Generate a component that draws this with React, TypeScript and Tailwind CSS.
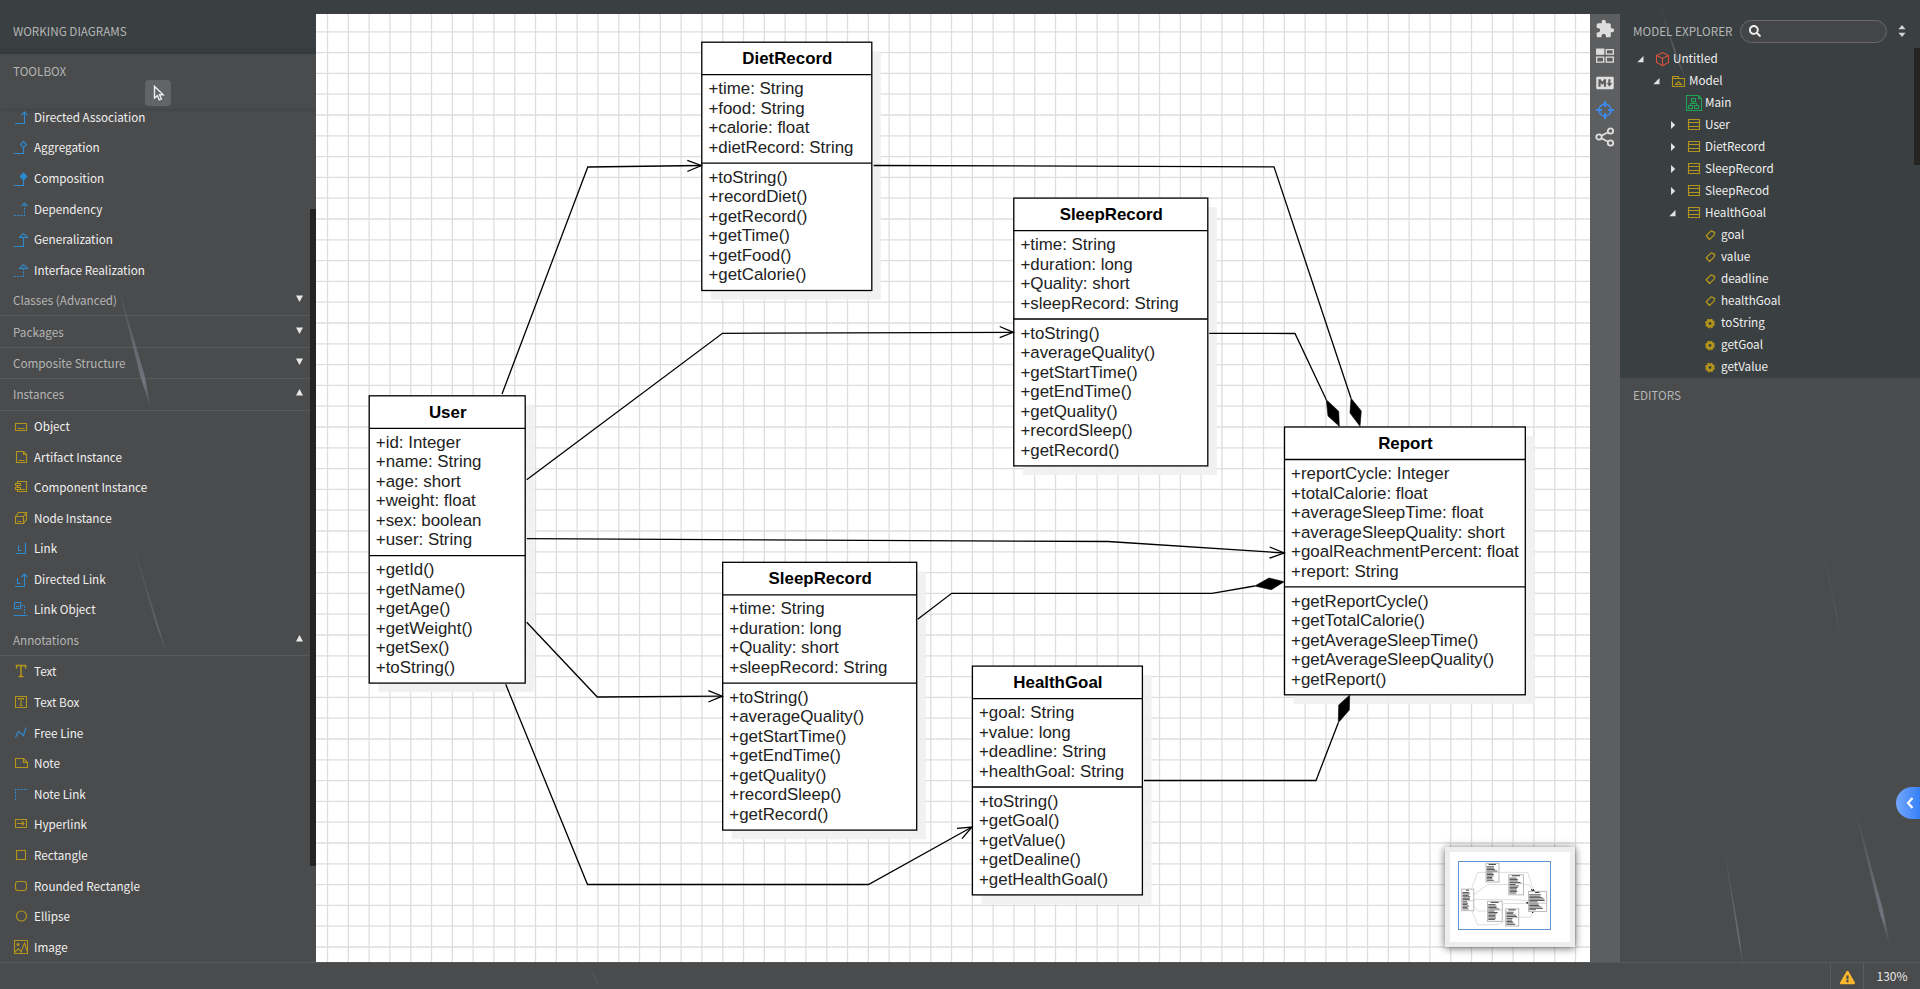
import type { ReactNode } from 'react';
import { FaExclamationTriangle, FaSearch } from 'react-icons/fa';
import { IoLogoMarkdown } from 'react-icons/io';
import { MdExtension } from 'react-icons/md';

const UNIT = 1.3;
const GRID = 16 * UNIT;
const LINE = 15 * UNIT;
const TITLE_H = 25 * UNIT;

interface ClassNode {
  name: string;
  x: number;
  y: number;
  width: number;
  attributes: string[];
  operations: string[];
}

interface Connector {
  points: string;
  arrow?: string;
  diamond?: string;
}

const SLEEP_ATTRIBUTES = ['+time: String', '+duration: long', '+Quality: short', '+sleepRecord: String'];
const SLEEP_OPERATIONS = [
  '+toString()',
  '+averageQuality()',
  '+getStartTime()',
  '+getEndTime()',
  '+getQuality()',
  '+recordSleep()',
  '+getRecord()',
];

const CLASSES: ClassNode[] = [
  {
    name: 'DietRecord',
    x: 385.8,
    y: 28.2,
    width: 170,
    attributes: ['+time: String', '+food: String', '+calorie: float', '+dietRecord: String'],
    operations: ['+toString()', '+recordDiet()', '+getRecord()', '+getTime()', '+getFood()', '+getCalorie()'],
  },
  {
    name: 'SleepRecord',
    x: 697.8,
    y: 184.1,
    width: 194,
    attributes: SLEEP_ATTRIBUTES,
    operations: SLEEP_OPERATIONS,
  },
  {
    name: 'User',
    x: 53.2,
    y: 381.8,
    width: 156,
    attributes: ['+id: Integer', '+name: String', '+age: short', '+weight: float', '+sex: boolean', '+user: String'],
    operations: ['+getId()', '+getName()', '+getAge()', '+getWeight()', '+getSex()', '+toString()'],
  },
  {
    name: 'SleepRecord',
    x: 406.7,
    y: 548.3,
    width: 194,
    attributes: SLEEP_ATTRIBUTES,
    operations: SLEEP_OPERATIONS,
  },
  {
    name: 'HealthGoal',
    x: 656.4,
    y: 652.1,
    width: 170,
    attributes: ['+goal: String', '+value: long', '+deadline: String', '+healthGoal: String'],
    operations: ['+toString()', '+getGoal()', '+getValue()', '+getDealine()', '+getHealthGoal()'],
  },
  {
    name: 'Report',
    x: 968.5,
    y: 413,
    width: 240.8,
    attributes: [
      '+reportCycle: Integer',
      '+totalCalorie: float',
      '+averageSleepTime: float',
      '+averageSleepQuality: short',
      '+goalReachmentPercent: float',
      '+report: String',
    ],
    operations: [
      '+getReportCycle()',
      '+getTotalCalorie()',
      '+getAverageSleepTime()',
      '+getAverageSleepQuality()',
      '+getReport()',
    ],
  },
];

const CONNECTORS: Connector[] = [
  { points: '186,380 271.8,153 385,151.5', arrow: '371.3,146.3 385.3,151.5 371.3,157.5' },
  { points: '210.7,465.7 406.5,319.3 697,318.3', arrow: '683.7,312.5 697.3,318.3 683.7,323.7' },
  { points: '210.7,524.7 792,527.5 968,539', arrow: '953.7,533 968.2,539 953.4,544.2' },
  { points: '210.7,608.3 281.3,683 406,682.2', arrow: '392.3,676.7 406.3,682.2 392.3,688' },
  { points: '189.7,670.3 271.5,870.5 552.5,870.5 656,813', arrow: '641,814.3 656,813 646,824.7' },
  { points: '557.7,151.5 958,152.8 1035,384.3', diamond: '1035,384.3 1034,399 1044,412.3 1045.3,397' },
  { points: '893.3,319.3 979,319.5 1010.3,385.7', diamond: '1010.3,385.7 1012,402 1023.3,412.3 1022.7,397.3' },
  { points: '601.7,605.3 635.7,579.3 896,579.3 938.7,572', diamond: '938.7,572 953,564 968.2,567.7 955.3,575.7' },
  { points: '828,766.5 1000,766.5 1022.3,708.7', diamond: '1022.3,708.7 1022.7,691 1033.7,681 1033.3,696' },
];

const VERTICALS = Array.from({ length: 61 }, (_, i) => 11.5 + i * GRID);
const HORIZONTALS = Array.from({ length: 45 }, (_, i) => 17.8 + i * GRID);

const attributesHeight = (node: ClassNode) => node.attributes.length * LINE + 8 * UNIT;
const nodeHeight = (node: ClassNode) =>
  TITLE_H + attributesHeight(node) + node.operations.length * LINE + 8 * UNIT;

function ClassBox({ node }: { node: ClassNode }) {
  const { x, y, width } = node;
  const attrTop = y + TITLE_H;
  const opTop = attrTop + attributesHeight(node);

  return (
    <g>
      <rect x={x + 9.1} y={y + 9.1} width={width} height={nodeHeight(node)} fill="#f0f0f0" fillOpacity={0.92} />
      <rect x={x} y={y} width={width} height={nodeHeight(node)} fill="#fff" stroke="#000" strokeWidth={1.3} />
      <path d={`M${x} ${attrTop}h${width}M${x} ${opTop}h${width}`} stroke="#000" strokeWidth={1.3} />
      <text x={x + width / 2 + 0.5} y={Math.round(y + 21.8)} textAnchor="middle" fontWeight={700} fill="#000">
        {node.name}
      </text>
      {node.attributes.map((line, i) => (
        <text key={line} x={x + 6.6} y={Math.round(attrTop + 19.6 + i * LINE)}>
          {line}
        </text>
      ))}
      {node.operations.map((line, i) => (
        <text key={line} x={x + 6.6} y={Math.round(opTop + 19.6 + i * LINE)}>
          {line}
        </text>
      ))}
    </g>
  );
}

function Diagram() {
  return (
    <svg
      width={1274}
      height={948}
      className="block font-['Liberation_Sans',Arial,sans-serif] text-[16.9px]"
      fill="#222"
    >
      <g stroke="#dedede" strokeWidth={1.3}>
        {VERTICALS.map((x) => (
          <line key={x} x1={x} x2={x} y1={0} y2={948} />
        ))}
        {HORIZONTALS.map((y) => (
          <line key={y} x1={0} x2={1274} y1={y} y2={y} />
        ))}
      </g>
      {CLASSES.map((node) => (
        <ClassBox key={`${node.name}-${node.x}`} node={node} />
      ))}
      {CONNECTORS.map((c) => (
        <g key={c.points} stroke="#000" strokeWidth={1.3}>
          <polyline points={c.points} fill="none" />
          {c.arrow && <polyline points={c.arrow} fill="none" />}
          {c.diamond && <polygon points={c.diamond} strokeWidth={0.6} fill="#000" />}
        </g>
      ))}
    </svg>
  );
}

function Minimap() {
  return (
    <div className="absolute top-[833px] left-[1129px] h-[100px] w-[130px] border-5 border-[#ededed] bg-white shadow-[0_1px_8px_rgba(0,0,0,0.6)]">
      <svg width={120} height={90} className="block">
        <g transform="translate(7.9 9.3) scale(0.0729)">
          {CONNECTORS.map((c) => (
            <g key={c.points}>
              <polyline points={c.points} fill="none" stroke="#ccc" strokeWidth={9} />
              {c.diamond && <polygon points={c.diamond} stroke="#000" strokeWidth={10} />}
            </g>
          ))}
          {CLASSES.map((node) => {
            const opTop = node.y + TITLE_H + attributesHeight(node);
            return (
              <g key={`${node.name}-${node.x}`}>
                <rect
                  x={node.x}
                  y={node.y}
                  width={node.width + 8}
                  height={nodeHeight(node) + 8}
                  fill="#fff"
                  stroke="#bbb"
                  strokeWidth={14}
                />
                <rect
                  x={node.x + node.width / 2 - node.name.length * 5}
                  y={node.y + 8}
                  width={node.name.length * 10}
                  height={13}
                  fill="#333"
                />
                <path d={`M${node.x} ${opTop}h${node.width}`} stroke="#999" strokeWidth={8} />
                {[...node.attributes, ...node.operations].map((line, i) => (
                  <rect
                    key={line}
                    x={node.x + 10}
                    y={node.y + TITLE_H + 8 + i * LINE + (i < node.attributes.length ? 0 : 10)}
                    width={line.length * 7.6}
                    height={12}
                    fill="#444"
                  />
                ))}
              </g>
            );
          })}
        </g>
        <rect x={8.5} y={9.5} width={92} height={68} fill="none" stroke="#6096cf" />
      </svg>
    </div>
  );
}

function Glyph({ children, className }: { children: ReactNode; className: string }) {
  return (
    <svg
      width={16}
      height={16}
      viewBox="0 0 16 16"
      fill="none"
      stroke="currentColor"
      strokeWidth={1.1}
      className={`shrink-0 ${className}`}
    >
      {children}
    </svg>
  );
}

const BLUE = 'text-[#2d8bd0]';
const GOLD = 'text-[#b4951c]';

interface ToolItem {
  label: string;
  color: string;
  icon: ReactNode;
}

const RELATIONS: ToolItem[] = [
  { label: 'Directed Association', color: BLUE, icon: <path d="M2 14.5h9.5V3M8.5 6l3-3 3 3" /> },
  { label: 'Aggregation', color: BLUE, icon: <path d="M.7 14.5h9.8V8.5M10.5 2.5l3 3-3 3-3-3z" /> },
  {
    label: 'Composition',
    color: BLUE,
    icon: (
      <>
        <path d="M.7 15.5h9.8V9" />
        <path d="M10.5 3l3.3 3.5-3.3 3.5-3.3-3.5z" fill="currentColor" />
      </>
    ),
  },
  {
    label: 'Dependency',
    color: BLUE,
    icon: (
      <>
        <path d="M1 14.5h10.5V3" strokeDasharray="2 1.2" />
        <path d="M8.5 5l3-3 3 3" />
      </>
    ),
  },
  { label: 'Generalization', color: BLUE, icon: <path d="M.7 15.5h9.8V7M6.5 6.5l4-4 4 4z" /> },
  {
    label: 'Interface Realization',
    color: BLUE,
    icon: (
      <>
        <path d="M.7 14.5h9.8V6.5" strokeDasharray="2 1.2" />
        <path d="M6.5 6.5l4-4 4 4z" />
      </>
    ),
  },
];

const INSTANCES: ToolItem[] = [
  { label: 'Object', color: GOLD, icon: <path d="M2.5 5.5h11v7h-11zM4.5 10.5h7" /> },
  { label: 'Artifact Instance', color: GOLD, icon: <path d="M3.5 2.5h7l3 3v8h-10zM10.5 2.5v3h3M5.5 11.5h6" /> },
  {
    label: 'Component Instance',
    color: GOLD,
    icon: <path d="M4.5 4.5v-2h9v10h-9v-2M2.5 4.5h5v2h-5zM2.5 8.5h5v2h-5zM4.5 6.5v2M8 10.5h4" />,
  },
  {
    label: 'Node Instance',
    color: GOLD,
    icon: <path d="M2.5 6.5h8v7h-8zM2.5 6.5l3-4h8l-3 4M13.5 2.5v7l-3 4M4.5 11.5h4" />,
  },
  { label: 'Link', color: BLUE, icon: <path d="M3 13.5h9.5V2.5M5.5 5v5.5h3" /> },
  { label: 'Directed Link', color: BLUE, icon: <path d="M2 15.5h9.5V3.5M8.5 6l3-3 3 3M4.5 7v5.5h3" /> },
  {
    label: 'Link Object',
    color: BLUE,
    icon: (
      <>
        <path d="M1.5 1.5h6v6h-6zM3 5.5h3M.5 14.5h14" />
        <path d="M8.5 4.5h3V14" strokeDasharray="2 1.2" />
      </>
    ),
  },
];

const ANNOTATIONS: ToolItem[] = [
  { label: 'Text', color: GOLD, icon: <path d="M3.5 5.5v-3h9v3M8 2.5v11M5.5 13.5h5" strokeWidth={1.5} /> },
  {
    label: 'Text Box',
    color: GOLD,
    icon: <path d="M2.5 2.5h11v11h-11zM5.5 6V4.5h5V6M8 4.5v7M6.5 11.5h3" />,
  },
  { label: 'Free Line', color: BLUE, icon: <path d="M2.5 12.5l3-6 5 4 2.5-8" strokeWidth={1.2} /> },
  { label: 'Note', color: GOLD, icon: <path d="M2.5 3.5h8l4 4v5h-12zM10.5 3.5v4h4" /> },
  { label: 'Note Link', color: BLUE, icon: <path d="M2.5 14V3.5H15" strokeDasharray="2 1.2" /> },
  { label: 'Hyperlink', color: GOLD, icon: <path d="M2.5 3.5h11v8h-11zM4 7.5h7M9 5.5l2 2-2 2" /> },
  { label: 'Rectangle', color: GOLD, icon: <path d="M3.5 3.5h9v9h-9z" /> },
  { label: 'Rounded Rectangle', color: GOLD, icon: <rect x={2.5} y={3.5} width={11} height={9} rx={2.5} /> },
  { label: 'Ellipse', color: GOLD, icon: <circle cx={8.5} cy={8} r={5} /> },
  {
    label: 'Image',
    color: GOLD,
    icon: (
      <>
        <path d="M1.5 1.5h13v13h-13zM2 13l3.5-3.5L8 13l3.5-9 3 9" />
        <circle cx={5} cy={5.5} r={1} fill="currentColor" />
      </>
    ),
  },
];

function ToolRows({ items }: { items: ToolItem[] }) {
  return (
    <>
      {items.map((item) => (
        <div key={item.label} className="flex h-[30.6px] items-center gap-[5px] pl-[13px] leading-[14px] text-[#f0f0f0]">
          <Glyph className={item.color}>{item.icon}</Glyph>
          <span>{item.label}</span>
        </div>
      ))}
    </>
  );
}

function SectionHeader({ label, open }: { label: string; open?: boolean }) {
  return (
    <div className="mr-[6px] flex h-[31.4px] items-center justify-between border-b border-[#59595b] pr-[7px] pl-[13px] text-[#b4b6b6]">
      <span>{label}</span>
      <svg width={7} height={7} className="-mt-[3px] fill-[#e8e8e8]">
        <path d={open ? 'M3.5 0L7 6.5H0z' : 'M0 .5h7L3.5 7z'} />
      </svg>
    </div>
  );
}

function Toolbox() {
  return (
    <aside className="flex w-[316px] shrink-0 flex-col">
      <div className="flex h-[34px] items-center bg-[#3a3f41] pl-[13px] text-[#b4b6b6]">WORKING DIAGRAMS</div>
      <div className="h-[6px] bg-[#373c3e]" />
      <div className="h-[55px] shrink-0 border-b border-[#474849] px-[13px] text-[#b4b6b6] shadow-[0_1px_3px_rgba(0,0,0,0.12)]">
        <div className="h-[26px] pt-[7px] leading-[20px]">TOOLBOX</div>
        <div className="mx-auto flex h-[26px] w-[26px] items-center justify-center rounded-sm bg-[#626567]">
          <svg width={14} height={18} viewBox="0 0 14 18" fill="none" stroke="#eee" strokeWidth={1.4} className="ml-[2px]">
            <path d="M2.5 2.5v11.5l2.8-2.4 2 4.2 2.1-1-1.9-4h3.7z" />
          </svg>
        </div>
      </div>
      <div className="relative min-h-0 flex-1 overflow-hidden">
        <div className="-mt-[7.5px]">
          <ToolRows items={RELATIONS} />
          <SectionHeader label="Classes (Advanced)" />
          <SectionHeader label="Packages" />
          <SectionHeader label="Composite Structure" />
          <SectionHeader label="Instances" open />
          <ToolRows items={INSTANCES} />
          <SectionHeader label="Annotations" open />
          <ToolRows items={ANNOTATIONS} />
        </div>
        <div className="absolute top-[100px] right-0 h-[657px] w-[6px] bg-[#242424]" />
      </div>
    </aside>
  );
}

type NodeKind = 'project' | 'model' | 'diagram' | 'class' | 'attribute' | 'operation';

interface TreeNode {
  label: string;
  kind: NodeKind;
  indent: string;
  state?: 'open' | 'closed';
}

const TREE: TreeNode[] = [
  { label: 'Untitled', kind: 'project', indent: 'pl-[17px]', state: 'open' },
  { label: 'Model', kind: 'model', indent: 'pl-[33px]', state: 'open' },
  { label: 'Main', kind: 'diagram', indent: 'pl-[49px]' },
  { label: 'User', kind: 'class', indent: 'pl-[49px]', state: 'closed' },
  { label: 'DietRecord', kind: 'class', indent: 'pl-[49px]', state: 'closed' },
  { label: 'SleepRecord', kind: 'class', indent: 'pl-[49px]', state: 'closed' },
  { label: 'SleepRecod', kind: 'class', indent: 'pl-[49px]', state: 'closed' },
  { label: 'HealthGoal', kind: 'class', indent: 'pl-[49px]', state: 'open' },
  { label: 'goal', kind: 'attribute', indent: 'pl-[65px]' },
  { label: 'value', kind: 'attribute', indent: 'pl-[65px]' },
  { label: 'deadline', kind: 'attribute', indent: 'pl-[65px]' },
  { label: 'healthGoal', kind: 'attribute', indent: 'pl-[65px]' },
  { label: 'toString', kind: 'operation', indent: 'pl-[65px]' },
  { label: 'getGoal', kind: 'operation', indent: 'pl-[65px]' },
  { label: 'getValue', kind: 'operation', indent: 'pl-[65px]' },
];

const KIND_COLORS: Record<NodeKind, string> = {
  project: 'text-[#d9513d]',
  model: GOLD,
  diagram: 'text-[#1fa354]',
  class: GOLD,
  attribute: GOLD,
  operation: GOLD,
};

const KIND_ICONS: Record<NodeKind, ReactNode> = {
  project: <path d="M8.5 1.5l6 3v7l-6 3.2-6-3.2v-7zM2.5 4.5l6 3 6-3M8.5 7.5v7" />,
  model: <path d="M2.5 13.5v-10h6v2h6v8h-12zM2.5 5.5h6M5.5 11.5l3-3 3 3z" />,
  diagram: (
    <path d="M.5 .5h12l3 3v12h-15zM12.5 .5v3h3M5.5 3.5h4v3h-4zM7.5 6.5v2M4.5 10.5v-2h6v2M2.5 10.5h4v3h-4zM8.5 10.5h4v3h-4z" />
  ),
  class: <path d="M2.5 2.5h11v10h-11zM2.5 5.5h11M2.5 9.5h11" />,
  attribute: <path d="M4.2 8.8l4.9-4.9 3.6 1.4-.6 2.8-4.6 4.4z" strokeLinejoin="round" strokeWidth={1.3} />,
  operation: (
    <>
      <circle cx={8} cy={8.5} r={2.7} strokeWidth={2.6} />
      <circle cx={8} cy={8.5} r={4.2} strokeWidth={1.4} strokeDasharray="2 1.3" />
    </>
  ),
};

function ModelExplorer() {
  return (
    <section className="relative h-[364px] bg-[#3a3f41]">
      <div className="flex h-[34px] items-center pl-[13px] text-[#b4b6b6]">
        <span className="w-[107px] whitespace-nowrap">MODEL EXPLORER</span>
        <div className="flex h-[23px] w-[147px] items-center rounded-full border border-[#67696b] bg-[#434547] pl-[8px]">
          <FaSearch size={12} className="text-[#eeeeee]" />
        </div>
        <svg width={8} height={12} className="ml-[11px] fill-[#d5d5d5]">
          <path d="M4 0l3.5 4.2h-7zM4 12l3.5-4.2h-7z" />
        </svg>
      </div>
      <div>
        {TREE.map((node) => (
          <div key={node.label} className={`flex h-[22px] items-center text-[#f0f0f0] ${node.indent}`}>
            <svg width={7} height={8} className="mr-[10px] shrink-0 fill-[#e2e2e2]">
              {node.state === 'open' && <path d="M6.5 1v6.3H.3z" />}
              {node.state === 'closed' && <path d="M2 0l4.2 4L2 8z" />}
            </svg>
            <Glyph className={KIND_COLORS[node.kind]}>{KIND_ICONS[node.kind]}</Glyph>
            <span className="-mt-[2px] ml-[3px]">{node.label}</span>
          </div>
        ))}
      </div>
      <div className="absolute top-[34px] right-0 h-[117px] w-[6px] bg-[#242423]" />
    </section>
  );
}

function SideToolbar() {
  return (
    <nav className="flex w-[30px] shrink-0 flex-col items-center gap-[8px] bg-[#5d5e60] pt-[5px] text-[#dedede]">
      <MdExtension size={20} />
      <svg width={18} height={20} fill="none" stroke="currentColor" strokeWidth={1.3} className="-mt-px">
        <path d="M.7 3.2h7v5h-7z" fill="currentColor" />
        <path d="M10.3 3.7h7v4.5h-7zM.7 11.2h7v5h-7zM10.3 11.2h7v5h-7z" />
      </svg>
      <IoLogoMarkdown size={20} className="-mt-[1px]" />
      <svg width={20} height={20} fill="none" stroke="#3b8af0" strokeWidth={2} className="-mt-px">
        <circle cx={10} cy={10} r={6} strokeWidth={1.6} />
        <path d="M10 1v6M10 13v6M1 10h6M13 10h6" />
      </svg>
      <svg width={20} height={20} fill="none" stroke="currentColor" strokeWidth={1.8} className="-mt-[1px]">
        <circle cx={4} cy={10} r={2.7} />
        <circle cx={15.5} cy={4} r={2.7} />
        <circle cx={15.5} cy={16} r={2.7} />
        <path d="M6.4 8.7l6.7-3.5M6.4 11.3l6.7 3.5" />
      </svg>
    </nav>
  );
}

function StatusBar() {
  return (
    <footer className="flex h-[27px] shrink-0 justify-end border-t border-[#565758] text-[#e6e6e6]">
      <div className="flex w-[33px] items-center justify-center border-l border-[#5a5b5c] pt-[2px]">
        <FaExclamationTriangle size={15} className="text-[#f9b52b]" />
      </div>
      <div className="flex w-[57px] items-center justify-center border-l border-[#5a5b5c] text-[12px]">130%</div>
    </footer>
  );
}

/* Faint meteor trails of the theme's backdrop */
function Trails() {
  return (
    <svg width={1920} height={989} className="pointer-events-none absolute inset-0">
      <defs>
        <linearGradient id="trail" x1="0" y1="0" x2="0" y2="1">
          <stop offset="0" stopColor="#8d90a0" stopOpacity={0} />
          <stop offset="0.8" stopColor="#8d90a0" stopOpacity={0.6} />
          <stop offset="1" stopColor="#8d90a0" stopOpacity={0.05} />
        </linearGradient>
      </defs>
      <g fill="url(#trail)">
        <path d="M116 278L144.5 375 151 409 140.5 377z" />
        <path d="M126 522L158.5 626 168 658 156.5 626z" opacity={0.6} />
        <path d="M1655 -10L1678 58 1686 80 1676 58z" opacity={0.7} />
        <path d="M1721 830L1738.5 930 1744 972 1736.8 930z" opacity={0.9} />
        <path d="M1853 800L1883 910 1890 946 1879.5 912z" />
        <path d="M1812 495L1837 615 1841 642 1836 615z" opacity={0.3} />
        <path d="M588 960L595 976 599 989 594 976z" opacity={0.6} />
      </g>
    </svg>
  );
}

export default function App() {
  return (
    <div className="relative flex h-[989px] w-[1920px] flex-col overflow-hidden bg-[#4a4b4c] font-['Noto_Sans_CJK_SC',sans-serif] text-[11.7px] leading-[18px]">
      <div className="h-[14px] shrink-0 bg-[#3a3f41]" />
      <div className="flex h-[948px] shrink-0">
        <Toolbox />
        <main className="relative w-[1274px] shrink-0 overflow-hidden bg-white">
          <Diagram />
          <Minimap />
        </main>
        <SideToolbar />
        <div className="flex-1">
          <ModelExplorer />
          <div className="pt-[8px] pl-[13px] text-[#b4b6b6]">EDITORS</div>
        </div>
      </div>
      <StatusBar />
      <Trails />
      <button className="absolute top-[787px] right-0 flex h-[32px] w-[24px] items-center justify-center rounded-l-full bg-linear-to-r from-[#72a6fc] to-[#3580f6]">
        <svg width={8} height={12} fill="none" stroke="#fff" strokeWidth={2.2} className="ml-[3px]">
          <path d="M6.5 1L2 6l4.5 5" />
        </svg>
      </button>
    </div>
  );
}
